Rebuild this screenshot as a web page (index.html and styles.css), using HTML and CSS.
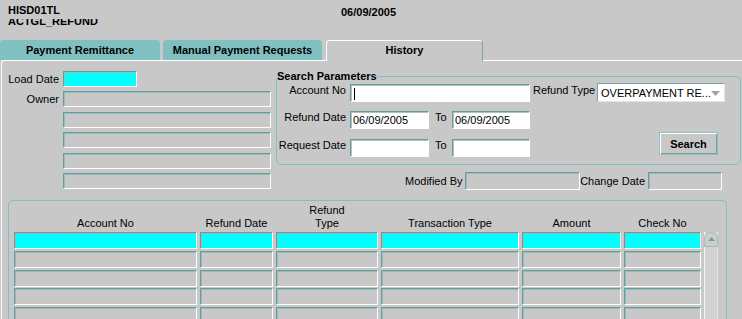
FILE: index.html
```html
<!DOCTYPE html>
<html lang="en">
<head>
  <meta charset="UTF-8">
  <title>ACTGL_REFUND - History</title>
  <link rel="stylesheet" href="styles.css">
</head>
<body>

<header class="top">
  <div class="ids">
    <div class="form-id">HISD01TL</div>
    <div class="module"><span>ACTGL_REFUND</span></div>
  </div>
  <div class="today">06/09/2005</div>
</header>

<nav class="tabs">
  <div class="tab first">Payment Remittance</div>
  <div class="tab second">Manual Payment Requests</div>
  <div class="tab active">History</div>
</nav>

<main class="panel">
  <div class="upper">
    <div class="owner-group">
      <label>Load Date</label><div class="field cur short"></div>
      <label>Owner</label><div class="field"></div>
      <span></span><div class="field"></div>
      <span></span><div class="field"></div>
      <span></span><div class="field"></div>
      <span></span><div class="field"></div>
    </div>

    <div class="right-col">
      <fieldset class="search">
        <legend>Search Parameters</legend>
        <div class="search-grid">
          <label class="lbl">Account No</label>
          <div class="field white wide"><span class="caret"></span></div>
          <label class="lbl-side">Refund Type</label>
          <div class="select">
            <span>OVERPAYMENT RE...</span>
            <svg class="drop" width="9" height="5" viewBox="0 0 9 5"><path d="M0 0h9L4.5 5z" fill="#a3a3a3"/></svg>
          </div>

          <label class="lbl r2">Refund Date</label>
          <div class="field white r2">06/09/2005</div>
          <label class="to r2">To</label>
          <div class="field white r2">06/09/2005</div>

          <label class="lbl r3">Request Date</label>
          <div class="field white r3"></div>
          <label class="to r3">To</label>
          <div class="field white r3"></div>
          <button class="btn">Search</button>
        </div>
      </fieldset>

      <div class="audit">
        <label class="a-lbl">Modified By</label>
        <div class="field mod"></div>
        <label class="a-lbl chg">Change Date</label>
        <div class="field chg-field"></div>
      </div>
    </div>
  </div>

  <section class="results">
    <div class="results-head">
      <div>Account No</div>
      <div>Refund Date</div>
      <div>Refund<br>Type</div>
      <div>Transaction Type</div>
      <div>Amount</div>
      <div>Check No</div>
      <div></div>
    </div>
    <div class="results-body">
      <div class="cell cur"></div><div class="cell cur"></div><div class="cell cur"></div><div class="cell cur"></div><div class="cell cur"></div><div class="cell cur"></div>
      <div class="scroll">
        <div class="scroll-up">
          <svg width="7" height="4" viewBox="0 0 7 4"><path d="M3.5 0L7 4H0z" fill="#7f9d9d"/></svg>
        </div>
      </div>
      <div class="cell"></div><div class="cell"></div><div class="cell"></div><div class="cell"></div><div class="cell"></div><div class="cell"></div>
      <div class="cell"></div><div class="cell"></div><div class="cell"></div><div class="cell"></div><div class="cell"></div><div class="cell"></div>
      <div class="cell"></div><div class="cell"></div><div class="cell"></div><div class="cell"></div><div class="cell"></div><div class="cell"></div>
      <div class="cell"></div><div class="cell"></div><div class="cell"></div><div class="cell"></div><div class="cell"></div><div class="cell"></div>
    </div>
  </section>
</main>

</body>
</html>
```

FILE: styles.css
```css
* {
  box-sizing: border-box;
}
html, body {
  margin: 0;
}
body {
  width: 742px;
  height: 319px;
  overflow: hidden;
  background: #c8c8c8;
  font-family: "Liberation Sans", Arial, sans-serif;
  font-size: 11px;
  line-height: 12px;
  color: #000;
}

/* header */
.top {
  display: grid;
  grid-template-columns: 333px auto;
  height: 39px;
  padding: 4px 0 0 8px;
  font-weight: bold;
}
.module {
  height: 9px;
  margin-top: 3px;
  overflow: hidden;
}
.module span {
  display: block;
  margin-top: -4px;
}
.today {
  padding-top: 2px;
}

/* tabs */
.tabs {
  display: flex;
  height: 21px;
  padding-top: 1px;
}
.tab {
  height: 20px;
  padding-top: 1px;
  line-height: 19px;
  background: #80c0c0;
  border-radius: 4px 4px 0 0;
  font-weight: bold;
  text-align: center;
}
.first {
  width: 160px;
}
.second {
  width: 159px;
  margin-left: 3px;
}
.active {
  position: relative;
  z-index: 1;
  width: 157px;
  height: 21px;
  margin-left: 4px;
  margin-bottom: -1px;
  padding-top: 0;
  background: #c8c8c8;
  border: 1px solid #fff;
  border-right-color: #7fa3a3;
  border-bottom: none;
}

/* panel */
.panel {
  margin-left: 1px;
  border-top: 1px solid #fff;
  border-left: 1px solid #fff;
  border-top-left-radius: 3px;
}
.upper {
  display: flex;
  align-items: flex-start;
  padding-top: 9px;
}
.owner-group {
  display: grid;
  grid-template-columns: 57px 208px;
  column-gap: 4px;
  row-gap: 4.4px;
  margin-top: 1px;
}
.owner-group label {
  align-self: center;
  text-align: right;
}
.owner-group .field {
  height: 16px;
}
.field {
  display: flex;
  align-items: center;
  height: 18px;
  padding: 1px 0 0 2px;
  background: #c8c8c8;
  border: 1px solid;
  border-color: #6a9a9a #fff #fff #6a9a9a;
  box-shadow: inset 1px 1px 0 #93bcbc;
}
.field.white {
  background: #fff;
  box-shadow: inset 1px 1px 0 #a8c4c4;
}
.field.cur {
  background: #00ffff;
}
.field.short {
  width: 74px;
}
.caret {
  width: 1px;
  height: 12px;
  margin-left: 1px;
  background: #000;
}

/* search parameters */
.right-col {
  margin-left: 5px;
}
.search {
  width: 465px;
  margin: 0;
  padding: 2px 15px 7px 0;
  border: 1px solid #80c0c0;
  border-radius: 5px;
}
.search legend {
  padding: 0;
  font-weight: bold;
}
.search-grid {
  display: grid;
  grid-template-columns: 73px 79px 23px 78px 67px 128px;
  grid-template-rows: 18px 18px 20px;
  row-gap: 8.5px;
}
.lbl {
  padding-right: 4px;
  text-align: right;
  white-space: nowrap;
}
.to {
  padding-left: 6px;
}
.lbl-side {
  padding-left: 3px;
  white-space: nowrap;
}
.wide {
  grid-column: 2 / 5;
}
.r2 {
  grid-row: 2;
}
.r3 {
  grid-row: 3;
  align-self: end;
  height: 18px;
}
.select {
  display: flex;
  align-items: center;
  justify-content: space-between;
  height: 19px;
  margin-top: -1px;
  padding: 1px 4px 0 3px;
  background: #fff;
  border: 1px solid;
  border-color: #7aa3a3 #e4e4e4 #e4e4e4 #7aa3a3;
  white-space: nowrap;
}
.drop {
  flex: none;
}
.btn {
  grid-column: 5 / 7;
  grid-row: 3;
  justify-self: end;
  align-self: start;
  width: 59px;
  height: 23px;
  margin: -5px 7px 0 0;
  padding: 0;
  font: bold 11px "Liberation Sans", Arial, sans-serif;
  color: #000;
  background: #c8c8c8;
  border: 1px solid #8dc2c2;
  box-shadow: inset 1px 1px 0 #fff, inset -1px -1px 0 #7a9c9c;
}

/* audit row */
.audit {
  display: flex;
  align-items: center;
  margin: 7px 0 0 129px;
}
.a-lbl {
  width: 60px;
  padding-right: 4px;
  text-align: right;
  white-space: nowrap;
}
.a-lbl.chg {
  width: 68px;
  padding-right: 3px;
}
.mod {
  width: 115px;
}
.chg-field {
  width: 74px;
}

/* results block */
.results {
  width: 719px;
  height: 140px;
  margin: 10px 0 0 6px;
  padding: 3px 0 0 5px;
  border: 1px solid #80c0c0;
  border-bottom: none;
  border-radius: 5px 5px 0 0;
}
.results-head,
.results-body {
  display: grid;
  grid-template-columns: 183px 73px 102px 138px 99px 77px 14px;
  column-gap: 3px;
}
.results-head {
  height: 26px;
  align-items: end;
  line-height: 13px;
  text-align: center;
}
.results-body {
  margin-top: 2px;
  grid-auto-rows: 17px;
  row-gap: 1.75px;
}
.cell {
  background: #c8c8c8;
  border: 1px solid;
  border-color: #6a9a9a #fff #fff #6a9a9a;
  box-shadow: inset 1px 1px 0 #93bcbc;
}
.cell.cur {
  background: #00ffff;
}
.scroll {
  grid-column: 7;
  grid-row: 1 / 6;
  background: #d3d3d3;
  border-left: 1px solid #f4f4f4;
  border-right: 1px solid #e6e6e6;
}
.scroll-up {
  display: flex;
  justify-content: center;
  align-items: center;
  height: 15px;
  margin-left: -1px;
  margin-right: -1px;
  padding-bottom: 2px;
  background: #cdcdcd;
  border: 1px solid #94c6c6;
  border-bottom-color: #b4b4b4;
  border-radius: 6px 6px 0 0;
}
```
